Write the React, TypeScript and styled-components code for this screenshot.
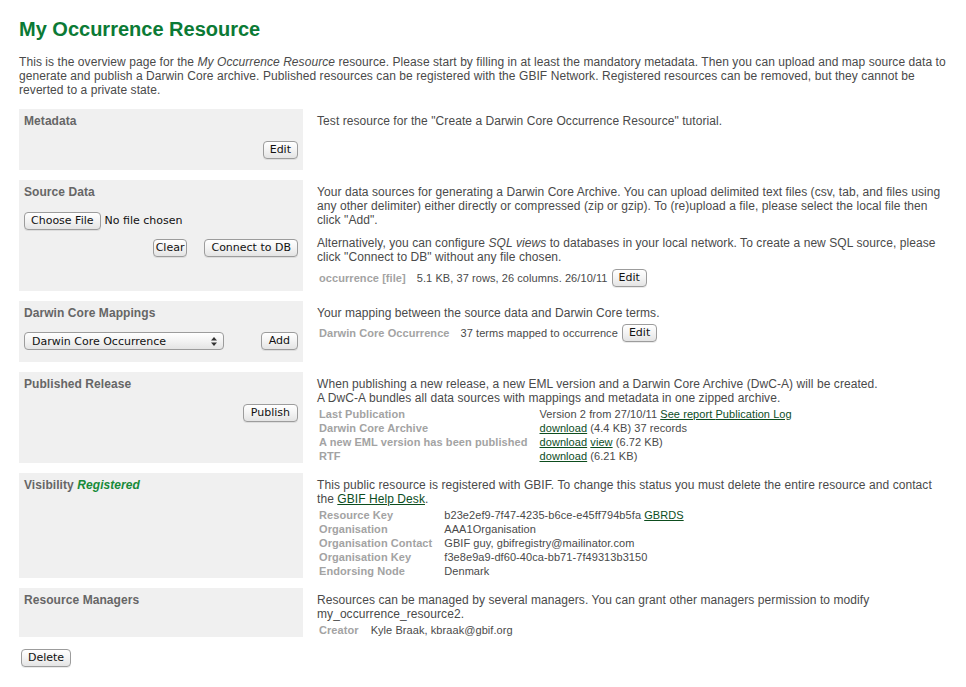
import React from "react";
import styled, { createGlobalStyle } from "styled-components";

const GlobalStyle = createGlobalStyle`
  html, body { margin: 0; padding: 0; background: #ffffff; }
  body {
    font-family: "Liberation Sans", Arial, Helvetica, sans-serif;
    font-size: 12px;
    line-height: 14px;
    letter-spacing: 0.07px;
    color: #4a4a4a;
  }
  * { box-sizing: border-box; }
`;

const Page = styled.div`
  width: 948px;
  padding: 17px 0 20px 19px;
`;

const Title = styled.h1`
  margin: 0 0 14px;
  font-size: 20px;
  line-height: 24px;
  font-weight: bold;
  letter-spacing: 0;
  color: #0b7a35;
`;

const Intro = styled.p`
  margin: 0 0 12px;
  width: 929px;
`;

const Section = styled.section`
  display: grid;
  grid-template-columns: 284px 631px;
  column-gap: 14px;
  margin-bottom: 10px;
`;

const Panel = styled.div<{ $pb?: number }>`
  background: #f0f0f0;
  padding: 5px 5px ${(p) => p.$pb ?? 0}px;
`;

const PanelTitle = styled.h2`
  margin: 0;
  font-size: 12px;
  line-height: 14px;
  font-weight: bold;
  color: #666666;
`;

const Status = styled.em`
  color: #178a38;
  font-weight: bold;
`;

const Actions = styled.div<{ $mt: number; $gap?: number; $between?: boolean }>`
  display: flex;
  align-items: center;
  justify-content: ${(p) => (p.$between ? "space-between" : "flex-end")};
  gap: ${(p) => p.$gap ?? 0}px;
  margin-top: ${(p) => p.$mt}px;
`;

const FileRow = styled.div`
  display: flex;
  align-items: center;
  gap: 4px;
  margin-top: 13px;
`;

const FileName = styled.span`
  font-family: "DejaVu Sans", "Lucida Grande", sans-serif;
  font-size: 11px;
  letter-spacing: 0;
  color: #111111;
`;

const Body = styled.div<{ $pb?: number }>`
  padding: 5px 0 ${(p) => p.$pb ?? 0}px;
`;

const Text = styled.p<{ $mt?: number }>`
  margin: ${(p) => p.$mt ?? 0}px 0 0;
`;

const InlineRow = styled.div<{ $mt: number }>`
  display: flex;
  align-items: center;
  margin-top: ${(p) => p.$mt}px;
`;

const RowLabel = styled.span`
  font-size: 11px;
  font-weight: bold;
  color: #a3a3a3;
  padding: 0 11px 0 2px;
`;

const RowValue = styled.span`
  font-size: 11px;
  padding-right: 4px;
`;

const InfoTable = styled.table`
  border-collapse: collapse;
  margin-top: 2px;
  font-size: 11px;
  line-height: 14px;
`;

const Th = styled.th`
  text-align: left;
  font-weight: bold;
  color: #a3a3a3;
  padding: 0 12px 0 2px;
  white-space: nowrap;
  vertical-align: top;
  height: 14px;
`;

const Td = styled.td`
  padding: 0;
  color: #4a4a4a;
  white-space: nowrap;
  vertical-align: top;
`;

const Link = styled.a`
  color: #0d4d1e;
  text-decoration: underline;
`;

const Button = styled.button<{ $px?: number }>`
  height: 18px;
  margin: 0;
  padding: 0 ${(p) => p.$px ?? 6}px;
  border: 1px solid #9c9c9c;
  border-radius: 4px;
  background: linear-gradient(#ffffff, #f3f3f3 50%, #e4e4e4);
  box-shadow: 0 1px 0 rgba(0, 0, 0, 0.08);
  font-family: "DejaVu Sans", "Lucida Grande", sans-serif;
  font-size: 11px;
  line-height: 16px;
  letter-spacing: 0;
  color: #111111;
  white-space: nowrap;
  cursor: pointer;
`;

const SelectBox = styled.div`
  position: relative;
  width: 200px;
  height: 18px;
`;

const Select = styled.select`
  appearance: none;
  -webkit-appearance: none;
  width: 100%;
  height: 18px;
  margin: 0;
  padding: 0 20px 0 7px;
  border: 1px solid #9c9c9c;
  border-radius: 4px;
  background: linear-gradient(#ffffff, #f3f3f3 50%, #e4e4e4);
  font-family: "DejaVu Sans", "Lucida Grande", sans-serif;
  font-size: 11px;
  color: #111111;
`;

const SelectArrows = styled.svg`
  position: absolute;
  right: 7px;
  top: 5px;
  pointer-events: none;
`;

const DeleteRow = styled.div`
  margin-top: 12px;
  padding-left: 2px;
`;

export default function App() {
  return (
    <>
      <GlobalStyle />
      <Page>
        <Title>My Occurrence Resource</Title>
        <Intro>
          This is the overview page for the <em>My Occurrence Resource</em> resource. Please start by filling in at
          least the mandatory metadata. Then you can upload and map source data to generate and publish a Darwin Core
          archive. Published resources can be registered with the GBIF Network. Registered resources can be removed,
          but they cannot be reverted to a private state.
        </Intro>

        <Section>
          <Panel $pb={11}>
            <PanelTitle>Metadata</PanelTitle>
            <Actions $mt={13}>
              <Button>Edit</Button>
            </Actions>
          </Panel>
          <Body>
            <Text>Test resource for the "Create a Darwin Core Occurrence Resource" tutorial.</Text>
          </Body>
        </Section>

        <Section>
          <Panel>
            <PanelTitle>Source Data</PanelTitle>
            <FileRow>
              <Button>Choose File</Button>
              <FileName>No file chosen</FileName>
            </FileRow>
            <Actions $mt={9} $gap={17}>
              <Button $px={2}>Clear</Button>
              <Button>Connect to DB</Button>
            </Actions>
          </Panel>
          <Body $pb={4}>
            <Text>
              Your data sources for generating a Darwin Core Archive. You can upload delimited text files (csv, tab,
              and files using any other delimiter) either directly or compressed (zip or gzip). To (re)upload a file,
              please select the local file then click "Add".
            </Text>
            <Text $mt={9}>
              Alternatively, you can configure <em>SQL views</em> to databases in your local network. To create a new
              SQL source, please click "Connect to DB" without any file chosen.
            </Text>
            <InlineRow $mt={5}>
              <RowLabel>occurrence [file]</RowLabel>
              <RowValue>5.1 KB, 37 rows, 26 columns. 26/10/11</RowValue>
              <Button>Edit</Button>
            </InlineRow>
          </Body>
        </Section>

        <Section>
          <Panel $pb={12}>
            <PanelTitle>Darwin Core Mappings</PanelTitle>
            <Actions $mt={12} $between>
              <SelectBox>
                <Select defaultValue="occ">
                  <option value="occ">Darwin Core Occurrence</option>
                </Select>
                <SelectArrows width="6" height="9" viewBox="0 0 6 9">
                  <path d="M3 0 L6 3.5 H0 Z" fill="#333" />
                  <path d="M3 9 L6 5.5 H0 Z" fill="#333" />
                </SelectArrows>
              </SelectBox>
              <Button $px={7}>Add</Button>
            </Actions>
          </Panel>
          <Body>
            <Text>Your mapping between the source data and Darwin Core terms.</Text>
            <InlineRow $mt={4}>
              <RowLabel>Darwin Core Occurrence</RowLabel>
              <RowValue>37 terms mapped to occurrence</RowValue>
              <Button>Edit</Button>
            </InlineRow>
          </Body>
        </Section>

        <Section>
          <Panel>
            <PanelTitle>Published Release</PanelTitle>
            <Actions $mt={13}>
              <Button $px={7}>Publish</Button>
            </Actions>
          </Panel>
          <Body>
            <Text>
              When publishing a new release, a new EML version and a Darwin Core Archive (DwC-A) will be created.
              <br />A DwC-A bundles all data sources with mappings and metadata in one zipped archive.
            </Text>
            <InfoTable>
              <tbody>
                <tr>
                  <Th>Last Publication</Th>
                  <Td>
                    Version 2 from 27/10/11 <Link href="#">See report </Link> <Link href="#">Publication Log</Link>
                  </Td>
                </tr>
                <tr>
                  <Th>Darwin Core Archive</Th>
                  <Td>
                    <Link href="#">download</Link> (4.4 KB) 37 records
                  </Td>
                </tr>
                <tr>
                  <Th>A new EML version has been published</Th>
                  <Td>
                    <Link href="#">download</Link> <Link href="#">view</Link> (6.72 KB)
                  </Td>
                </tr>
                <tr>
                  <Th>RTF</Th>
                  <Td>
                    <Link href="#">download</Link> (6.21 KB)
                  </Td>
                </tr>
              </tbody>
            </InfoTable>
          </Body>
        </Section>

        <Section>
          <Panel>
            <PanelTitle>
              Visibility <Status>Registered</Status>
            </PanelTitle>
          </Panel>
          <Body>
            <Text>
              This public resource is registered with GBIF. To change this status you must delete the entire resource
              and contact the <Link href="#">GBIF Help Desk</Link>.
            </Text>
            <InfoTable>
              <tbody>
                <tr>
                  <Th>Resource Key</Th>
                  <Td>
                    b23e2ef9-7f47-4235-b6ce-e45ff794b5fa <Link href="#">GBRDS</Link>
                  </Td>
                </tr>
                <tr>
                  <Th>Organisation</Th>
                  <Td>AAA1Organisation</Td>
                </tr>
                <tr>
                  <Th>Organisation Contact</Th>
                  <Td>GBIF guy, gbifregistry@mailinator.com</Td>
                </tr>
                <tr>
                  <Th>Organisation Key</Th>
                  <Td>f3e8e9a9-df60-40ca-bb71-7f49313b3150</Td>
                </tr>
                <tr>
                  <Th>Endorsing Node</Th>
                  <Td>Denmark</Td>
                </tr>
              </tbody>
            </InfoTable>
          </Body>
        </Section>

        <Section>
          <Panel>
            <PanelTitle>Resource Managers</PanelTitle>
          </Panel>
          <Body>
            <Text>
              Resources can be managed by several managers. You can grant other managers permission to modify
              my_occurrence_resource2.
            </Text>
            <InfoTable>
              <tbody>
                <tr>
                  <Th>Creator</Th>
                  <Td>Kyle Braak, kbraak@gbif.org</Td>
                </tr>
              </tbody>
            </InfoTable>
          </Body>
        </Section>

        <DeleteRow>
          <Button>Delete</Button>
        </DeleteRow>
      </Page>
    </>
  );
}
